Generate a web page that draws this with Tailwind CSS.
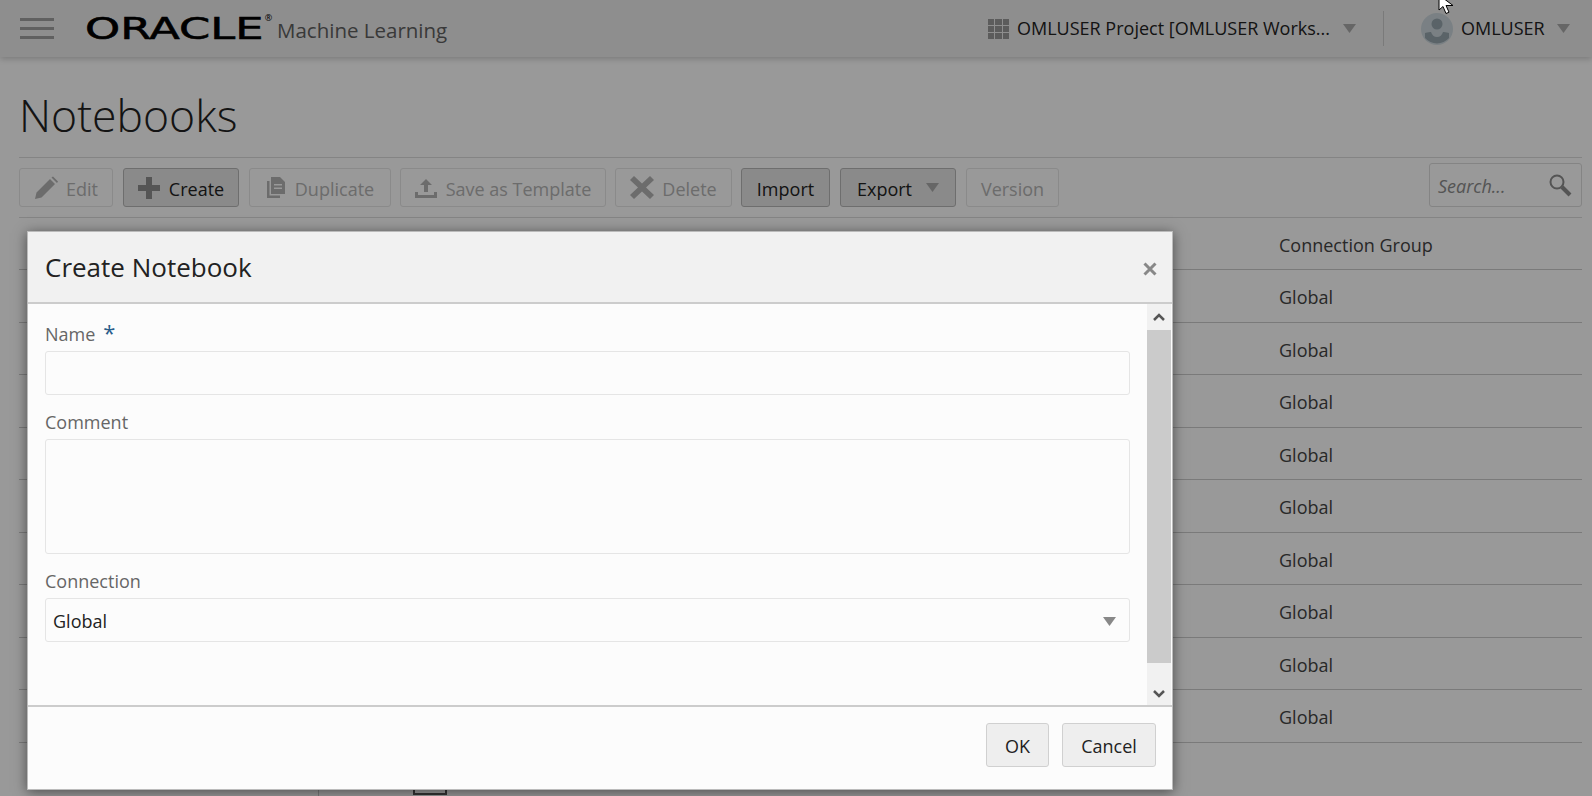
<!doctype html>
<html lang="en">
  <head>
    <meta charset="utf-8" />
    <meta name="viewport" content="width=device-width, initial-scale=1" />
    <script src="https://cdn.jsdelivr.net/npm/@tailwindcss/browser@4"></script>
    <title>Notebooks</title>
  </head>
  <body class="relative h-[796px] overflow-hidden bg-white font-['Open_Sans',sans-serif] text-[18px] text-[#222]">
    <header class="flex h-[57px] items-center bg-[#ededed] shadow-[0_2px_6px_rgba(0,0,0,0.2)]">
      <div class="ml-5 flex w-[34px] flex-col gap-[6.5px]">
        <span class="h-[2.5px] bg-[#a0a0a0]"></span>
        <span class="h-[2.5px] bg-[#a0a0a0]"></span>
        <span class="h-[2.5px] bg-[#a0a0a0]"></span>
      </div>
      <div class="ml-[31px] flex w-[192px] items-start">
        <span class="origin-left scale-x-[1.44] font-['DejaVu_Sans',sans-serif] text-[31px] leading-none text-black [-webkit-text-stroke:0.6px_black]">ORACLE</span>
        <span class="ml-[56px] text-[9px] leading-none text-black">®</span>
      </div>
      <span class="mt-[4px] text-[20.500px] text-[#606060]">Machine Learning</span>
      <div class="ml-auto flex items-center">
        <div class="grid w-[21px] grid-cols-3 gap-[1px]">
          <span class="h-[6px] bg-[#999]"></span><span class="h-[6px] bg-[#999]"></span><span class="h-[6px] bg-[#999]"></span>
          <span class="h-[6px] bg-[#999]"></span><span class="h-[6px] bg-[#999]"></span><span class="h-[6px] bg-[#999]"></span>
          <span class="h-[6px] bg-[#999]"></span><span class="h-[6px] bg-[#999]"></span><span class="h-[6px] bg-[#999]"></span>
        </div>
        <span class="ml-2 w-[314px] whitespace-nowrap">OMLUSER Project [OMLUSER Works...</span>
        <svg class="ml-3" width="13" height="9" viewBox="0 0 13 9"><path d="M0 0h13L6.500 9z" fill="#aaa" /></svg>
        <span class="ml-[27px] h-[35px] w-px bg-[#ccc]"></span>
        <svg class="ml-[37px]" width="32" height="32" viewBox="0 0 32 32">
          <circle cx="16" cy="16" r="16" fill="#cbd6dc" />
          <circle cx="16" cy="11" r="5.500" fill="#97a5ae" />
          <path d="M4 20c3-1 5-1 6-1 1 3 3 5 6 5s5-2 6-5c1 0 3 0 6 1v5a16 16 0 0 1-24 0z" fill="#97a5ae" />
        </svg>
        <span class="ml-2 w-[84px]">OMLUSER</span>
        <svg class="mr-[22px] ml-3" width="13" height="9" viewBox="0 0 13 9"><path d="M0 0h13L6.500 9z" fill="#aaa" /></svg>
      </div>
    </header>

    <main class="pr-[10px] pl-[19px]">
      <h1 class="flex h-[100px] items-center pt-[17px] text-[44.500px] font-light text-[#222]">Notebooks</h1>
      <div class="flex h-[61px] items-center gap-[10px] border-y border-[#ddd]">
        <button class="flex h-[39px] w-[94px] items-center justify-center gap-2 rounded-[3px] border border-[#e6e6e6] pt-[3px] text-[#b4b4b4]">
          <svg class="-mt-[3px]" width="24" height="24" viewBox="0 0 24 24" fill="#b4b4b4"><path d="M1 23l1.500-6.500L16 3l5 5L7.500 21.500zM17.500 1.500l1.500-1 5 5-1 1.500z" /></svg>
          Edit
        </button>
        <button class="flex h-[39px] w-[116px] items-center justify-center gap-[9px] rounded-[3px] border border-[#b8b8b8] bg-[#e6e6e6] pt-[3px]">
          <svg class="-mt-[3px]" width="22" height="22" viewBox="0 0 22 22" fill="#8e8e8e"><path d="M8 0h6v8h8v6h-8v8H8v-8H0V8h8z" /></svg>
          Create
        </button>
        <button class="flex h-[39px] w-[142px] items-center justify-center gap-[9px] rounded-[3px] border border-[#e6e6e6] pt-[3px] text-[#b4b4b4]">
          <svg class="-mt-[3px]" width="20" height="21" viewBox="0 0 20 21" fill="#b4b4b4"><path d="M5 0h9l5 5v12H5zM8 7v1.500h8V7zM8 10.500V12h8v-1.500z" fill-rule="evenodd" /><path d="M1 4h2.500v14.500H14V21H1z" /></svg>
          Duplicate
        </button>
        <button class="ml-[-1px] flex h-[39px] w-[206px] items-center justify-center gap-[9px] rounded-[3px] border border-[#e6e6e6] pt-[3px] text-[#b4b4b4]">
          <svg class="-mt-[3px]" width="22" height="20" viewBox="0 0 22 20" fill="#b4b4b4"><path d="M11 1l6 6h-4v7H9V7H5zM0 14h3v3h16v-3h3v6H0z" /></svg>
          Save as Template
        </button>
        <button class="ml-[-1px] flex h-[39px] w-[117px] items-center justify-center gap-2 rounded-[3px] border border-[#e6e6e6] pt-[3px] text-[#b4b4b4]">
          <svg class="-mt-[3px]" width="24" height="23" viewBox="0 0 24 23" fill="#b4b4b4"><path d="M4 0l8 7.500L20 0l4 4-8 7.500 8 7.500-4 4-8-7.500L4 23l-4-4 8-7.500L0 4z" /></svg>
          Delete
        </button>
        <button class="ml-[-1px] flex h-[39px] w-[89px] items-center justify-center rounded-[3px] border border-[#b8b8b8] bg-[#e6e6e6] pt-[3px]">Import</button>
        <button class="flex h-[39px] w-[116px] items-center justify-center gap-[14px] rounded-[3px] border border-[#b8b8b8] bg-[#e6e6e6] pt-[3px]">
          Export
          <svg class="-mt-[3px]" width="13" height="9" viewBox="0 0 13 9"><path d="M0 0h13L6.500 9z" fill="#aaa" /></svg>
        </button>
        <button class="flex h-[39px] w-[93px] items-center justify-center rounded-[3px] border border-[#e6e6e6] pt-[3px] text-[#b4b4b4]">Version</button>
        <div class="mt-[-6px] ml-auto flex h-[44px] w-[153px] items-center justify-between rounded-[3px] border border-[#ddd] pt-[3px] pr-[9px] pl-2 text-[#8c8c8c] italic">
          Search...
          <svg class="-mt-[3px]" width="24" height="24" viewBox="0 0 24 24" fill="none" stroke="#8c8c8c"><circle cx="9" cy="9" r="6.500" stroke-width="2" /><path d="M14 14l8 8" stroke-width="4" /></svg>
        </div>
      </div>

      <div class="text-[#444]">
        <div class="flex h-[52px] items-center border-b border-[#ccc] pt-[4px] pl-[1260px]">Connection Group</div>
        <div class="flex h-[52.500px] items-center border-b border-[#ccc] pt-[4px] pl-[1260px]">Global</div>
        <div class="flex h-[52.500px] items-center border-b border-[#ccc] pt-[4px] pl-[1260px]">Global</div>
        <div class="flex h-[52.500px] items-center border-b border-[#ccc] pt-[4px] pl-[1260px]">Global</div>
        <div class="flex h-[52.500px] items-center border-b border-[#ccc] pt-[4px] pl-[1260px]">Global</div>
        <div class="flex h-[52.500px] items-center border-b border-[#ccc] pt-[4px] pl-[1260px]">Global</div>
        <div class="flex h-[52.500px] items-center border-b border-[#ccc] pt-[4px] pl-[1260px]">Global</div>
        <div class="flex h-[52.500px] items-center border-b border-[#ccc] pt-[4px] pl-[1260px]">Global</div>
        <div class="flex h-[52.500px] items-center border-b border-[#ccc] pt-[4px] pl-[1260px]">Global</div>
        <div class="flex h-[52.500px] items-center border-b border-[#ccc] pt-[4px] pl-[1260px]">Global</div>
      </div>
      <div class="mt-[42px] flex h-[20px] items-start">
        <div class="h-[20px] w-[300px] border-r border-[#ccc]"></div>
        <div class="ml-[94px] h-[10px] w-[34px] border-x-2 border-b-2 border-[#555]"></div>
      </div>
    </main>

    <div class="absolute inset-0 bg-black/40"></div>

    <svg class="absolute top-[-6px] left-[1438px]" width="20" height="22" viewBox="0 0 20 22">
      <path d="M1 1v15l4-3.500 3 7 3-1.300-3-6.700h7z" fill="#fff" stroke="#000" />
    </svg>

    <div class="absolute top-[231px] left-[27px] flex h-[559px] w-[1146px] flex-col border border-[#bbb] bg-[#fcfcfc] shadow-[0_2px_12px_rgba(0,0,0,0.5)]">
      <div class="flex h-[72px] items-center justify-between border-b-2 border-[#ccc] bg-[#f1f1f1] pr-[15px] pl-[17px]">
        <h2 class="text-[26px] text-[#222]">Create Notebook</h2>
        <svg class="mt-1" width="14" height="14" viewBox="0 0 14 14"><path d="M1.500 1.500l11 11M12.500 1.500l-11 11" stroke="#888" stroke-width="3" /></svg>
      </div>
      <div class="flex h-[403px] border-b-2 border-[#ccc]">
        <form class="flex-1 pt-[18px] pr-[17px] pl-[17px] text-[#666]">
          <label class="flex h-[29px] items-start leading-[24px]">Name <span class="ml-2 text-[22px] leading-[20px] text-[#2a5d8a]">*</span></label>
          <div class="h-[44px] rounded-[3px] border border-[#e5e5e5]"></div>
          <label class="mt-[15px] block h-[29px] leading-[24px]">Comment</label>
          <div class="h-[115px] rounded-[3px] border border-[#e5e5e5]"></div>
          <label class="mt-[15px] block h-[29px] leading-[24px]">Connection</label>
          <div class="flex h-[44px] items-center justify-between rounded-[3px] border border-[#e5e5e5] pt-[2px] pr-[13px] pl-[7px] text-[#222]">
            Global
            <svg width="13" height="9" viewBox="0 0 13 9"><path d="M0 0h13L6.500 9z" fill="#888" /></svg>
          </div>
        </form>
        <div class="mr-[1px] flex w-[24px] flex-col bg-[#f1f1f1]">
          <div class="flex h-[26px] items-center justify-center">
            <svg width="12" height="8" viewBox="0 0 12 8" fill="none"><path d="M1 7l5-5 5 5" stroke="#555" stroke-width="2.500" /></svg>
          </div>
          <div class="h-[333px] bg-[#cbcbcb]"></div>
          <div class="flex flex-1 items-end justify-center pb-[7px]">
            <svg width="12" height="8" viewBox="0 0 12 8" fill="none"><path d="M1 1l5 5 5-5" stroke="#555" stroke-width="2.500" /></svg>
          </div>
        </div>
      </div>
      <div class="flex flex-1 items-start justify-end gap-[13px] pt-[16px] pr-[16px]">
        <button class="h-[44px] w-[63px] rounded-[3px] border border-[#d0d0d0] bg-[#eee] pt-[2px]">OK</button>
        <button class="h-[44px] w-[94px] rounded-[3px] border border-[#d0d0d0] bg-[#eee] pt-[2px]">Cancel</button>
      </div>
    </div>
  </body>
</html>
